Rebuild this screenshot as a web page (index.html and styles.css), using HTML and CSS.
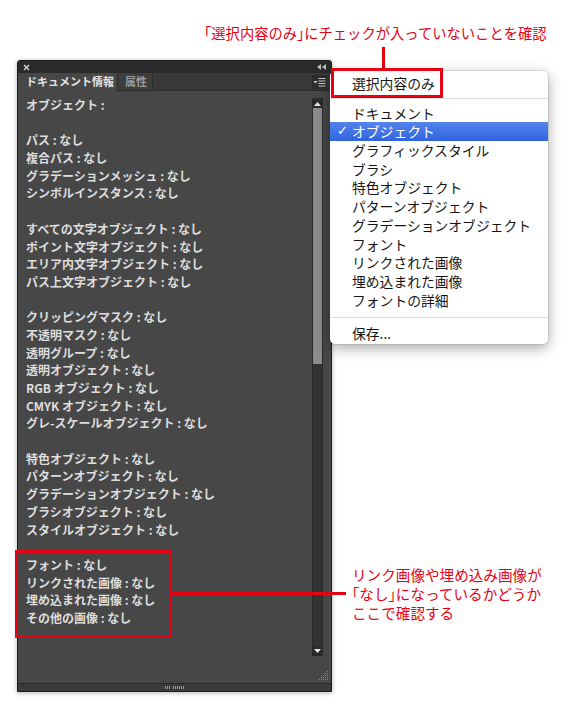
FILE: index.html
```html
<!DOCTYPE html>
<html lang="ja">
<head>
<meta charset="utf-8">
<title>ドキュメント情報</title>
<link rel="stylesheet" href="styles.css">
</head>
<body>
<div class="stage">
  <p class="note note-top">「選択内容のみ<span class="half">」</span>にチェックが入っていないことを確認</p>
  <div class="vline"></div>

  <section class="panel">
    <header class="titlebar">
      <svg class="close" width="7" height="7" viewBox="0 0 7 7"><path d="M1 1L6 6M6 1L1 6" stroke="#cfcfcf" stroke-width="1.5"/></svg>
      <svg class="collapse" width="9" height="6" viewBox="0 0 9 6"><polygon points="4,0 4,6 0,3" fill="#bdbdbd"/><polygon points="9,0 9,6 5,3" fill="#bdbdbd"/></svg>
    </header>
    <nav class="tabs">
      <span class="tab active">ドキュメント情報</span>
      <span class="tab">属性</span>
      <span class="menu-btn">
        <svg width="15" height="14" viewBox="0 0 15 14"><polygon points="1.5,6 5.5,6 3.5,8.5" fill="#cfcfcf"/><rect x="6.5" y="3" width="7" height="1" fill="#cfcfcf"/><rect x="6.5" y="5.5" width="7" height="1" fill="#cfcfcf"/><rect x="6.5" y="8" width="7" height="1" fill="#cfcfcf"/><rect x="6.5" y="10.5" width="7" height="1" fill="#cfcfcf"/></svg>
      </span>
    </nav>
    <div class="body">
      <div class="info">
        <div class="group"><p>オブジェクト :</p></div>
        <div class="group">
          <p>パス : なし</p>
          <p>複合パス : なし</p>
          <p>グラデーションメッシュ : なし</p>
          <p>シンボルインスタンス : なし</p>
        </div>
        <div class="group">
          <p>すべての文字オブジェクト : なし</p>
          <p>ポイント文字オブジェクト : なし</p>
          <p>エリア内文字オブジェクト : なし</p>
          <p>パス上文字オブジェクト : なし</p>
        </div>
        <div class="group">
          <p>クリッピングマスク : なし</p>
          <p>不透明マスク : なし</p>
          <p>透明グループ : なし</p>
          <p>透明オブジェクト : なし</p>
          <p>RGB オブジェクト : なし</p>
          <p>CMYK オブジェクト : なし</p>
          <p>グレ-スケールオブジェクト : なし</p>
        </div>
        <div class="group">
          <p>特色オブジェクト : なし</p>
          <p>パターンオブジェクト : なし</p>
          <p>グラデーションオブジェクト : なし</p>
          <p>ブラシオブジェクト : なし</p>
          <p>スタイルオブジェクト : なし</p>
        </div>
        <div class="group">
          <p>フォント : なし</p>
          <p>リンクされた画像 : なし</p>
          <p>埋め込まれた画像 : なし</p>
          <p>その他の画像 : なし</p>
        </div>
      </div>
      <div class="scrollbar">
        <div class="arrow"><svg width="7" height="4" viewBox="0 0 7 4"><polygon points="0,4 7,4 3.5,0" fill="#e8e8e8"/></svg></div>
        <div class="thumb"></div>
        <div class="track"></div>
        <div class="arrow"><svg width="7" height="4" viewBox="0 0 7 4"><polygon points="0,0 7,0 3.5,4" fill="#e8e8e8"/></svg></div>
      </div>
      <svg class="grip" width="10" height="12" viewBox="0 0 10 12">
        <g fill="#8a8a8a">
          <rect x="8" y="1" width="1" height="1"/>
          <rect x="6" y="3" width="1" height="1"/><rect x="8" y="3" width="1" height="1"/>
          <rect x="4" y="5" width="1" height="1"/><rect x="6" y="5" width="1" height="1"/><rect x="8" y="5" width="1" height="1"/>
          <rect x="2" y="7" width="1" height="1"/><rect x="4" y="7" width="1" height="1"/><rect x="6" y="7" width="1" height="1"/><rect x="8" y="7" width="1" height="1"/>
          <rect x="0" y="9" width="1" height="1"/><rect x="2" y="9" width="1" height="1"/><rect x="4" y="9" width="1" height="1"/><rect x="6" y="9" width="1" height="1"/><rect x="8" y="9" width="1" height="1"/>
        </g>
      </svg>
    </div>
    <footer class="bottombar">
      <svg width="19" height="3" viewBox="0 0 19 3"><g fill="#9a9a9a"><rect x="0" y="0" width="1" height="3"/><rect x="2" y="0" width="1" height="3"/><rect x="4" y="0" width="1" height="3"/><rect x="8" y="0" width="1" height="3"/><rect x="10" y="0" width="1" height="3"/><rect x="12" y="0" width="1" height="3"/><rect x="14" y="0" width="1" height="3"/><rect x="16" y="0" width="1" height="3"/><rect x="18" y="0" width="1" height="3"/></g></svg>
    </footer>
  </section>

  <div class="menu">
    <ul class="menu-group first">
      <li>選択内容のみ</li>
    </ul>
    <ul class="menu-group middle">
      <li>ドキュメント</li>
      <li class="selected">オブジェクト</li>
      <li>グラフィックスタイル</li>
      <li>ブラシ</li>
      <li>特色オブジェクト</li>
      <li>パターンオブジェクト</li>
      <li>グラデーションオブジェクト</li>
      <li>フォント</li>
      <li>リンクされた画像</li>
      <li>埋め込まれた画像</li>
      <li>フォントの詳細</li>
    </ul>
    <ul class="menu-group last">
      <li>保存...</li>
    </ul>
  </div>

  <div class="mark mark-menu"></div>
  <div class="mark mark-list"></div>
  <div class="hline"></div>
  <p class="note note-side">リンク画像や埋め込み画像が<br><span class="half">「</span>なし<span class="half">」</span>になっているかどうか<br>ここで確認する</p>
</div>
</body>
</html>
```

FILE: styles.css
```css
html, body {
  margin: 0;
  padding: 0;
  background: #ffffff;
}

.stage {
  position: relative;
  width: 584px;
  height: 711px;
  box-sizing: border-box;
  padding: 60px 0 0 17px;
  font-family: "Noto Sans CJK JP", "Noto Sans", sans-serif;
  overflow: hidden;
}

/* ---------- annotations ---------- */
.note {
  position: absolute;
  margin: 0;
  color: #e50012;
  line-height: 19px;
  white-space: nowrap;
}

.note .half {
  font-feature-settings: "halt";
}

.note-top {
  left: 197px;
  top: 23px;
  font-size: 14.3px;
}

.note-side {
  left: 352px;
  top: 565px;
  font-size: 14.6px;
}

.vline {
  position: absolute;
  left: 382px;
  top: 47px;
  width: 3px;
  height: 22px;
  background: #e50012;
}

.hline {
  position: absolute;
  left: 172px;
  top: 592px;
  width: 174px;
  height: 3px;
  background: #e50012;
}

.mark {
  position: absolute;
  box-sizing: border-box;
  border: 3px solid #e50012;
  z-index: 5;
}

.mark-menu {
  left: 331px;
  top: 68px;
  width: 112px;
  height: 30px;
}

.mark-list {
  left: 15px;
  top: 550px;
  width: 157px;
  height: 88px;
}

/* ---------- panel ---------- */
.panel {
  width: 315px;
  height: 632px;
  box-sizing: border-box;
  border: 1px solid #1d1d1d;
  border-radius: 3px 3px 0 0;
  background: #474747;
  display: flex;
  flex-direction: column;
  box-shadow: 0 1px 5px rgba(0, 0, 0, 0.3);
}

.titlebar {
  height: 12px;
  flex: none;
  background: #2a2a2a;
  border-radius: 2px 2px 0 0;
  display: flex;
  align-items: center;
  justify-content: space-between;
  padding: 0 5px 0 5px;
}

.tabs {
  height: 18px;
  flex: none;
  box-sizing: border-box;
  background: #393939;
  border-bottom: 1px solid #2b2b2b;
  display: flex;
  align-items: stretch;
}

.tab {
  box-sizing: border-box;
  font-size: 11px;
  font-weight: 700;
  line-height: 17px;
  white-space: nowrap;
  width: 35px;
  padding-left: 7px;
  color: #9b9b9b;
  background: #3e3e3e;
  border-right: 1px solid #2b2b2b;
}

.tab.active {
  width: 100px;
  padding-left: 8px;
  color: #e4e4e4;
  background: #474747;
  height: 18px;
  border-right: 1px solid #2b2b2b;
}

.menu-btn {
  margin: 2px 4px 0 auto;
  width: 15px;
  height: 14px;
  background: #2c2c2c;
  display: flex;
}

.body {
  position: relative;
  flex: 1;
  display: flex;
  justify-content: space-between;
  align-items: flex-start;
}

.info {
  padding: 5px 0 0 8px;
  color: #dedede;
  font-size: 12px;
  font-weight: 700;
}

.info p {
  margin: 0;
  line-height: 17.69px;
  white-space: nowrap;
}

.group {
  margin-bottom: 17.69px;
}

.scrollbar {
  margin: 7px 8px 0 0;
  width: 11px;
  height: 558px;
  display: flex;
  flex-direction: column;
  background: #2f2f2f;
  box-sizing: border-box;
  border: 1px solid #2a2a2a;
}

.arrow {
  height: 9px;
  flex: none;
  display: flex;
  align-items: center;
  justify-content: center;
  background: #2a2a2a;
}

.thumb {
  height: 256px;
  flex: none;
  background: #8b8b8b;
}

.track {
  flex: 1;
  background: #333333;
}

.grip {
  position: absolute;
  right: 2px;
  bottom: 1px;
}

.bottombar {
  height: 8px;
  flex: none;
  box-sizing: border-box;
  border-top: 1px solid #262626;
  background: #3a3a3a;
  display: flex;
  align-items: center;
  justify-content: center;
}

/* ---------- popup menu ---------- */
.menu {
  position: absolute;
  left: 330px;
  top: 71px;
  width: 218px;
  height: 273px;
  box-sizing: border-box;
  background: #ffffff;
  border-radius: 5px;
  box-shadow: 0 4px 14px rgba(0, 0, 0, 0.35), 0 0 0 1px rgba(0, 0, 0, 0.08);
  padding-top: 3px;
  z-index: 4;
}

.menu-group {
  list-style: none;
  margin: 0;
  padding: 5px 0 8px;
  border-bottom: 1px solid #dcdcdc;
}

.menu-group.first {
  padding: 0 0 5px;
}

.menu-group.last {
  border-bottom: none;
  padding: 6px 0 0;
}

.menu-group li {
  position: relative;
  height: 18.7px;
  line-height: 18.7px;
  padding-left: 22px;
  font-size: 13.8px;
  color: #151515;
  white-space: nowrap;
}

.menu-group li.selected {
  color: #ffffff;
  background: linear-gradient(#5485ec, #2f64dc);
}

.menu-group li.selected::before {
  content: "✓";
  position: absolute;
  left: 7px;
  top: 0;
  font-weight: 700;
  font-family: "DejaVu Sans", sans-serif;
  font-size: 13px;
}
```
